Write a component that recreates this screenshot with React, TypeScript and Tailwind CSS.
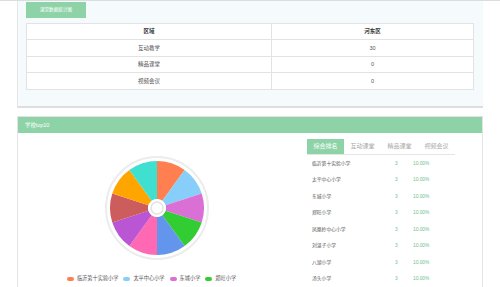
const statRows = [
  { area: "互动教学", value: "30" },
  { area: "精品课堂", value: "0" },
  { area: "视频会议", value: "0" },
];

const schools = [
  { name: "临沂第十实验小学", color: "#ff7f50" },
  { name: "太平中心小学", color: "#87cefa" },
  { name: "东城小学", color: "#da70d6" },
  { name: "郑旺小学", color: "#32cd32" },
  { name: "凤凰岭中心小学", color: "#6495ed" },
  { name: "刘湛子小学", color: "#ff69b4" },
  { name: "八湖小学", color: "#ba55d3" },
  { name: "汤头小学", color: "#cd5c5c" },
  { name: "九曲小学", color: "#ffa500" },
  { name: "相公小学", color: "#40e0d0" },
];

const tabs = ["综合排名", "互动课堂", "精品课堂", "视频会议"];

function slicePath(i: number, n: number, r: number, r0: number, c: number) {
  const a0 = ((i / n) * 360 - 90) * (Math.PI / 180);
  const a1 = (((i + 1) / n) * 360 - 90) * (Math.PI / 180);
  const p = (a: number, rr: number) =>
    `${(c + rr * Math.cos(a)).toFixed(2)} ${(c + rr * Math.sin(a)).toFixed(2)}`;
  return `M ${p(a0, r)} A ${r} ${r} 0 0 1 ${p(a1, r)} L ${p(a1, r0)} A ${r0} ${r0} 0 0 0 ${p(a0, r0)} Z`;
}

function Pie() {
  return (
    <svg width="110" height="110" viewBox="0 0 110 110">
      <circle cx="55" cy="55" r="51" fill="#fff" stroke="#ececec" strokeWidth="2" />
      {schools.map((s, i) => (
        <path key={s.name} d={slicePath(i, schools.length, 47, 9, 55)} fill={s.color} />
      ))}
      <circle cx="55" cy="55" r="9" fill="#fff" />
      <circle cx="55" cy="55" r="6" fill="#fff" stroke="#e2e2e2" strokeWidth="1.5" />
    </svg>
  );
}

export default function App() {
  return (
    <div className="w-[500px] h-[287px] overflow-hidden bg-white border-t border-[#dcdcdc] font-['Liberation_Sans','Noto_Sans_CJK_SC',sans-serif]">
      <div className="pl-[17px] pr-[17px]">
        {/* 课堂数据统计 */}
        <div className="h-[107px] bg-[#f5fbfc] border-l border-[#e6e6e6] border-b-2 border-b-[#dedede] pl-[8px] pr-[9px] pt-[1px]">
          <div className="w-[60px] h-[16px] bg-[#8ed3a7] text-white text-[4.6px] flex items-center justify-center">
            课堂数据统计图
          </div>
          <table className="mt-[5px] w-full bg-white border border-[#e3e3e3] border-collapse text-[5.5px] text-[#555]">
            <thead>
              <tr className="h-[16px]">
                <th className="w-[245px] border border-[#e3e3e3] font-bold text-[#333]">区域</th>
                <th className="border border-[#e3e3e3] font-bold text-[#333]">河东区</th>
              </tr>
            </thead>
            <tbody>
              {statRows.map((r) => (
                <tr key={r.area} className="h-[16.5px]">
                  <td className="border border-[#e3e3e3] text-center">{r.area}</td>
                  <td className="border border-[#e3e3e3] text-center">{r.value}</td>
                </tr>
              ))}
            </tbody>
          </table>
        </div>

        {/* 学校top10 */}
        <div className="mt-[8px] border border-[#e3e3e3] h-[200px]">
          <div className="h-[16px] bg-[#8ed3a7] text-white text-[5.4px] flex items-center pl-[7px]">
            学校top10
          </div>
          <div className="flex">
            <div className="w-[277px] flex flex-col items-center pt-[20px]">
              <Pie />
              <div className="mt-[12px] flex items-center gap-[5px] text-[5.2px] text-[#555] ml-[-10px]">
                {schools.slice(0, 4).map((s) => (
                  <div key={s.name} className="flex items-center gap-[3px]">
                    <span className="w-[7px] h-[4px] rounded-[2px]" style={{ backgroundColor: s.color }} />
                    <span>{s.name}</span>
                  </div>
                ))}
              </div>
            </div>
            <div className="pl-[12px] pt-[6px]">
              <div className="flex w-[148px] border-b border-[#e5e5e5]">
                {tabs.map((t, i) => (
                  <div
                    key={t}
                    className={
                      i === 0
                        ? "w-[37px] h-[15px] flex items-center justify-center text-[6px] bg-[#8ed3a7] text-white"
                        : "w-[37px] h-[15px] flex items-center justify-center text-[6px] text-[#aaa]"
                    }
                  >
                    {t}
                  </div>
                ))}
              </div>
              {schools.slice(0, 8).map((s) => (
                <div key={s.name} className="flex items-center h-[16.5px] w-[148px] text-[4.8px]">
                  <span className="w-[88px] pl-[5px] text-[#555]">{s.name}</span>
                  <span className="w-[18px] text-[#6cc08c]">3</span>
                  <span className="text-[#6cc08c]">10.00%</span>
                </div>
              ))}
            </div>
          </div>
        </div>
      </div>
    </div>
  );
}
